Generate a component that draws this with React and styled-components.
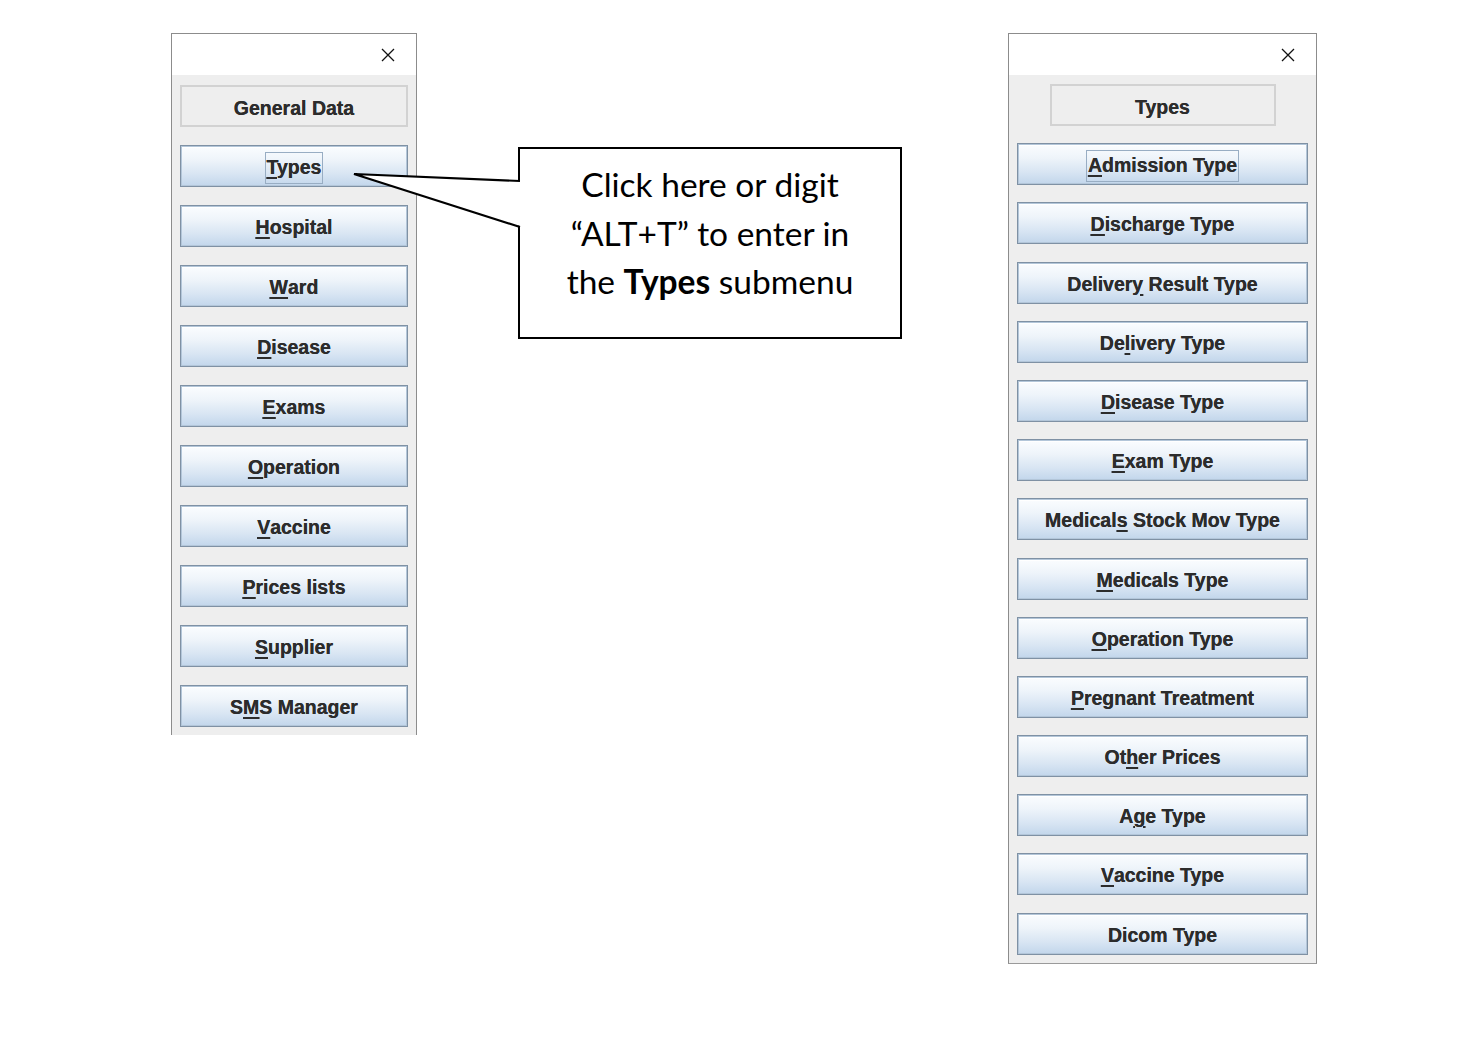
import styled, { createGlobalStyle } from "styled-components";

const GlobalStyle = createGlobalStyle`
  html, body {
    margin: 0;
    padding: 0;
    background: #ffffff;
  }
`;

const Page = styled.div`
  display: flex;
  align-items: flex-start;
  padding: 33px 0 0 171px;
  width: 1473px;
  height: 1055px;
  box-sizing: border-box;
`;

const Window = styled.div`
  width: ${(p) => p.$width}px;
  box-sizing: border-box;
  border: 1px solid #8c8c8c;
  border-bottom: ${(p) => (p.$cut ? "none" : "1px solid #9a9a9a")};
  margin-left: ${(p) => p.$offset || 0}px;
  background: #eeeeee;
  display: flex;
  flex-direction: column;
`;

const TitleBar = styled.div`
  height: 41px;
  background: #ffffff;
  display: flex;
  align-items: center;
  justify-content: flex-end;
  padding-right: 21px;
`;

const CloseIcon = () => (
  <svg width="14" height="14" viewBox="0 0 14 14">
    <path d="M1 1 L13 13 M13 1 L1 13" stroke="#111" strokeWidth="1.3" fill="none" />
  </svg>
);

const Body = styled.div`
  display: flex;
  flex-direction: column;
  align-items: stretch;
  gap: ${(p) => p.$gap}px;
  padding: ${(p) => p.$top}px 8px ${(p) => p.$bottom}px 8px;
`;

const Heading = styled.div`
  height: 42px;
  box-sizing: border-box;
  border: 2px solid #d2d2d2;
  padding-top: 4px;
  display: flex;
  align-items: center;
  justify-content: center;
  font-family: "Liberation Sans", Arial, sans-serif;
  font-weight: bold;
  font-size: 19.5px;
  color: #2c2c2c;
  text-shadow: 0 0 0.4px #2c2c2c;
  align-self: ${(p) => (p.$narrow ? "center" : "stretch")};
  width: ${(p) => (p.$narrow ? "226px" : "auto")};
`;

const Button = styled.div`
  height: 42px;
  box-sizing: border-box;
  border: 1px solid #7f91a4;
  box-shadow: inset 0 0 0 1px #b3c6d9, inset 0 2px 0 #ffffff;
  background: linear-gradient(#fbfdff 0%, #eef4fa 35%, #d8e5f3 70%, #c2d6eb 100%);
  padding-top: 3px;
  display: flex;
  align-items: center;
  justify-content: center;
  font-family: "Liberation Sans", Arial, sans-serif;
  font-weight: bold;
  font-size: 19.5px;
  color: #2c2c2c;
  text-shadow: 0 0 0.4px #2c2c2c;
  white-space: pre;
`;

const Focus = styled.span`
  border: 1px solid #98adc3;
  padding: 3px 1px 4px;
`;

const Key = styled.span`
  text-decoration: underline;
  text-decoration-thickness: 2px;
  text-underline-offset: 3px;
`;

const Callout = styled.div`
  position: relative;
  margin: 114px 0 0 101px;
  width: 384px;
  height: 192px;
  box-sizing: border-box;
  border: 2px solid #000000;
  background: #ffffff;
  padding-top: 11px;
  font-family: Lato, "Open Sans", sans-serif;
  font-size: 33.5px;
  line-height: 48.5px;
  color: #000000;
  text-align: center;
`;

const Pointer = styled.svg`
  position: absolute;
  left: -168px;
  top: 22px;
  overflow: visible;
`;

const Line = styled.div``;

function Label({ text, k, focus }) {
  const parts =
    k == null ? (
      text
    ) : (
      <>
        {text.slice(0, k)}
        <Key>{text[k]}</Key>
        {text.slice(k + 1)}
      </>
    );
  return <Button>{focus ? <Focus>{parts}</Focus> : parts}</Button>;
}

const general = [
  ["Types", 0],
  ["Hospital", 0],
  ["Ward", 0],
  ["Disease", 0],
  ["Exams", 0],
  ["Operation", 0],
  ["Vaccine", 0],
  ["Prices lists", 0],
  ["Supplier", 0],
  ["SMS Manager", 1],
];

const types = [
  ["Admission Type", 0],
  ["Discharge Type", 0],
  ["Delivery Result Type", 7],
  ["Delivery Type", 2],
  ["Disease Type", 0],
  ["Exam Type", 0],
  ["Medicals Stock Mov Type", 7],
  ["Medicals Type", 0],
  ["Operation Type", 0],
  ["Pregnant Treatment", 0],
  ["Other Prices", 2],
  ["Age Type", 1],
  ["Vaccine Type", 0],
  ["Dicom Type", null],
];

export default function App() {
  return (
    <>
      <GlobalStyle />
      <Page>
        <Window $width={246} $cut>
          <TitleBar>
            <CloseIcon />
          </TitleBar>
          <Body $gap={18} $top={10} $bottom={8}>
            <Heading>General Data</Heading>
            {general.map(([t, k], i) => (
              <Label key={t} text={t} k={k} focus={i === 0} />
            ))}
          </Body>
        </Window>

        <Callout>
          <Pointer width="172" height="60" viewBox="0 0 172 60">
            <polygon points="2,3 171,10 171,56" fill="#ffffff" />
            <polyline
              points="168,10 2,3 168,56"
              fill="none"
              stroke="#000000"
              strokeWidth="2.2"
              strokeLinejoin="miter"
            />
          </Pointer>
          <Line>Click here or digit</Line>
          <Line>“ALT+T” to enter in</Line>
          <Line>
            the <b>Types</b> submenu
          </Line>
        </Callout>

        <Window $width={309} $offset={106}>
          <TitleBar>
            <CloseIcon />
          </TitleBar>
          <Body $gap={17.2} $top={9} $bottom={8}>
            <Heading $narrow>Types</Heading>
            {types.map(([t, k], i) => (
              <Label key={t} text={t} k={k} focus={i === 0} />
            ))}
          </Body>
        </Window>
      </Page>
    </>
  );
}
